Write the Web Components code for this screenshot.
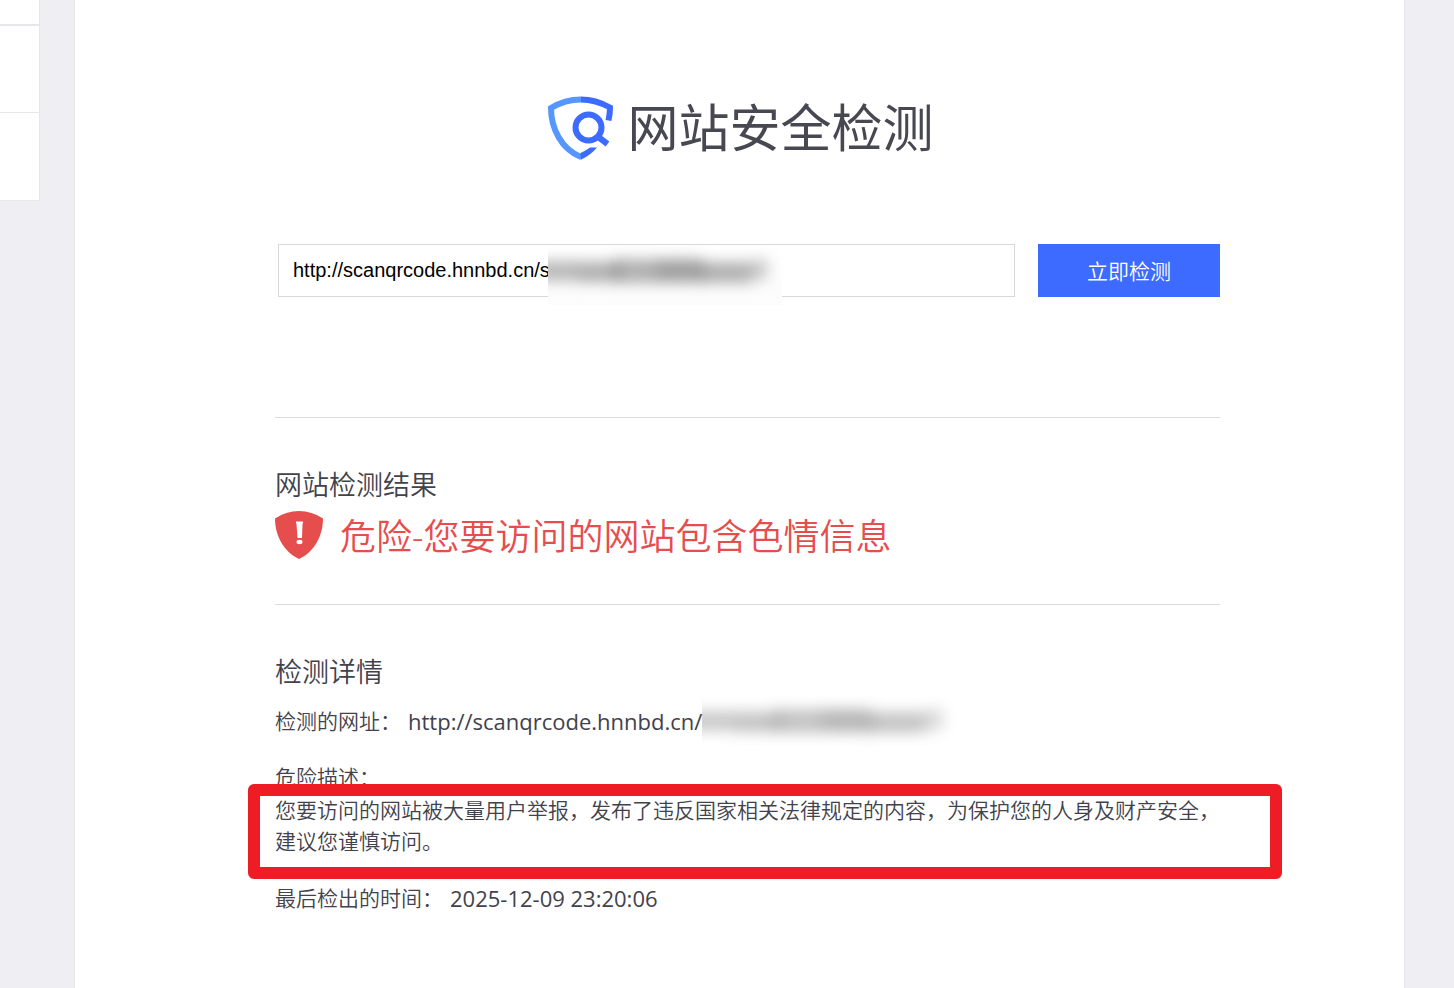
<!DOCTYPE html>
<html lang="zh-CN">
<head>
<meta charset="utf-8">
<title>网站安全检测</title>
<style>
html,body{margin:0;min-height:100%}
body{background:#efeef3;color:#42424c;font:350 21px/31px "Open Sans","Noto Sans CJK SC",sans-serif}
</style>
</head>
<body>
<safety-page></safety-page>
<script>
const define=(name,html)=>customElements.define(name,class extends HTMLElement{
  constructor(){super();this.attachShadow({mode:'open'}).innerHTML=html;}
});

define('side-cards',`
<style>
:host{display:block}
div{box-sizing:border-box;height:88px;background:#fff;border:solid #e6e6eb;border-width:0 1px 1px 0}
.cut{height:26px;border-bottom-width:2px}
.first{height:87px}
</style>
<div class="cut"></div><div class="first"></div><div></div>`);

define('brand-title',`
<style>
:host{display:flex;justify-content:center;align-items:center;gap:14px;height:76px}
svg{width:66px;height:66px;flex:none}
h1{margin:0;font-size:51px;line-height:70px;height:76px;font-weight:400;color:#484852;font-family:"Noto Sans CJK SC",sans-serif}
</style>
<svg viewBox="-1 0 66 66" fill="none" aria-hidden="true">
<path d="M33 4.500C22 4.500 12 7.500 3 13C3 33 13 54 33 62" stroke="#5596ff" stroke-width="6"/>
<path d="M33 4.500C44 4.500 53 7.500 62 12.500Q62 18 60.500 25.500" stroke="#3d6bff" stroke-width="6"/>
<path d="M32.500 65V58Q37 56 42 52.500H49Q43 60 32.500 65Z" fill="#3d6bff"/>
<circle cx="40.500" cy="32.500" r="13" stroke="#3d6bff" stroke-width="6"/>
<path d="M49 41L59.500 49" stroke="#3d6bff" stroke-width="6"/>
</svg>
<h1><slot></slot></h1>`);

define('redacted-smudge',`
<style>
:host{display:block;overflow:hidden;background:linear-gradient(#fff,#fcfcfc)}
svg{display:block;width:100%;height:100%}
</style>
<svg viewBox="0 0 234 60" preserveAspectRatio="none" aria-hidden="true">
<defs><filter id="soft" filterUnits="userSpaceOnUse" x="-40" y="-20" width="320" height="100" color-interpolation-filters="sRGB"><feGaussianBlur stdDeviation="7"/></filter></defs>
<g filter="url(#soft)" fill="#666">
<rect x="-12" y="16" width="84" height="20" opacity=".46"/>
<rect x="30" y="24" width="36" height="15" opacity=".15"/>
<rect x="66" y="14" width="90" height="24" opacity=".5"/>
<rect x="108" y="14" width="42" height="21" opacity=".22"/>
<rect x="152" y="17" width="52" height="21" opacity=".5"/>
<rect x="204" y="14" width="16" height="21" opacity=".32"/>
</g></svg>`);

define('url-form',`
<style>
:host{display:block}
form{display:flex;gap:23px;margin:0 0 0 3px}
label{position:relative;flex:1;min-width:0;display:flex}
input{box-sizing:border-box;width:100%;height:53px;border:1px solid #d9d9dd;border-radius:0;padding:0 14px;background:#fff;color:#000;font:400 20px "Liberation Sans",Arial,sans-serif;outline:0}
redacted-smudge{position:absolute;left:270px;top:1px;width:234px;height:60px}
button{flex:none;width:182px;height:53px;border:0;padding:2px 0 0;background:#3d6bff;color:#fff;font:inherit;cursor:pointer}
</style>
<form onsubmit="return false">
<label><input type="text" aria-label="网址" value="http://scanqrcode.hnnbd.cn/s"><redacted-smudge></redacted-smudge></label>
<button type="submit">立即检测</button>
</form>`);

define('report-section',`
<style>
:host{display:block;border-top:1px solid #dcdcdf;padding-top:46px}
h2{margin:0;font-size:27px;line-height:42px;font-weight:inherit}
</style>
<h2><slot name="title"></slot></h2><slot></slot>`);

define('danger-verdict',`
<style>
:host{display:flex;align-items:center;gap:17px;height:58px;padding-bottom:2px;color:#e64d4d}
svg{width:48px;height:48px;flex:none}
p{margin:0;font-size:36px;line-height:60px;padding-top:4px}
</style>
<svg viewBox="0 0 48 48" aria-hidden="true">
<path d="M0 7.500Q11 0 24 0T48 7.500C48 25 39 41 24 48C9 41 0 25 0 7.500Z" fill="#e64d4d"/>
<path d="M21 10.500H28V12L27.500 13L27 27H22.500L21.500 13L21 12Z" fill="#fff"/><ellipse cx="24.500" cy="31" rx="3" ry="2.200" fill="#fff"/>
</svg>
<p><slot></slot></p>`);

define('detail-row',`
<style>
:host{display:flex;gap:7px;line-height:31px}
span{flex:none}
.value{display:flex;font-size:22px;font-weight:400}
</style>
<span><slot name="label"></slot></span><span class="value"><slot></slot></span>`);

define('danger-note',`
<style>
:host{display:block;position:relative}
p{margin:0}
.text{margin-top:2px}
.mark{position:absolute;box-sizing:border-box;left:-27px;right:-62px;top:22px;height:95px;border:12px solid #ee1c25;border-radius:6px;pointer-events:none}
</style>
<p><slot name="label"></slot></p><p class="text"><slot></slot></p><div class="mark"></div>`);

define('safety-page',`
<style>
:host{display:grid;grid-template-columns:40px minmax(0,1fr);column-gap:34px;padding-right:49px;min-height:100vh}
main{background:#fff;border:solid #e6e6eb;border-width:0 1px;padding:90px 184px 72px 200px}
brand-title{margin-left:-14px}
url-form{margin:78px 0 120px}
.result{margin-bottom:38px}
.url{margin:13px 0 25px}
.time{margin:26px 0 0}
detail-row redacted-smudge{width:256px;height:60px;margin:-11px 0 -18px;background:none;opacity:.75}
</style>
<side-cards></side-cards>
<main>
<brand-title>网站安全检测</brand-title>
<url-form></url-form>
<report-section class="result"><span slot="title">网站检测结果</span>
<danger-verdict>危险-您要访问的网站包含色情信息</danger-verdict></report-section>
<report-section><span slot="title">检测详情</span>
<detail-row class="url"><span slot="label">检测的网址：</span><span>http://scanqrcode.hnnbd.cn/</span><redacted-smudge></redacted-smudge></detail-row>
<danger-note><span slot="label">危险描述：</span>您要访问的网站被大量用户举报，发布了违反国家相关法律规定的内容，为保护您的人身及财产安全，建议您谨慎访问。</danger-note>
<detail-row class="time"><span slot="label">最后检出的时间：</span>2025-12-09 23:20:06</detail-row>
</report-section>
</main>`);
</script>
</body>
</html>
